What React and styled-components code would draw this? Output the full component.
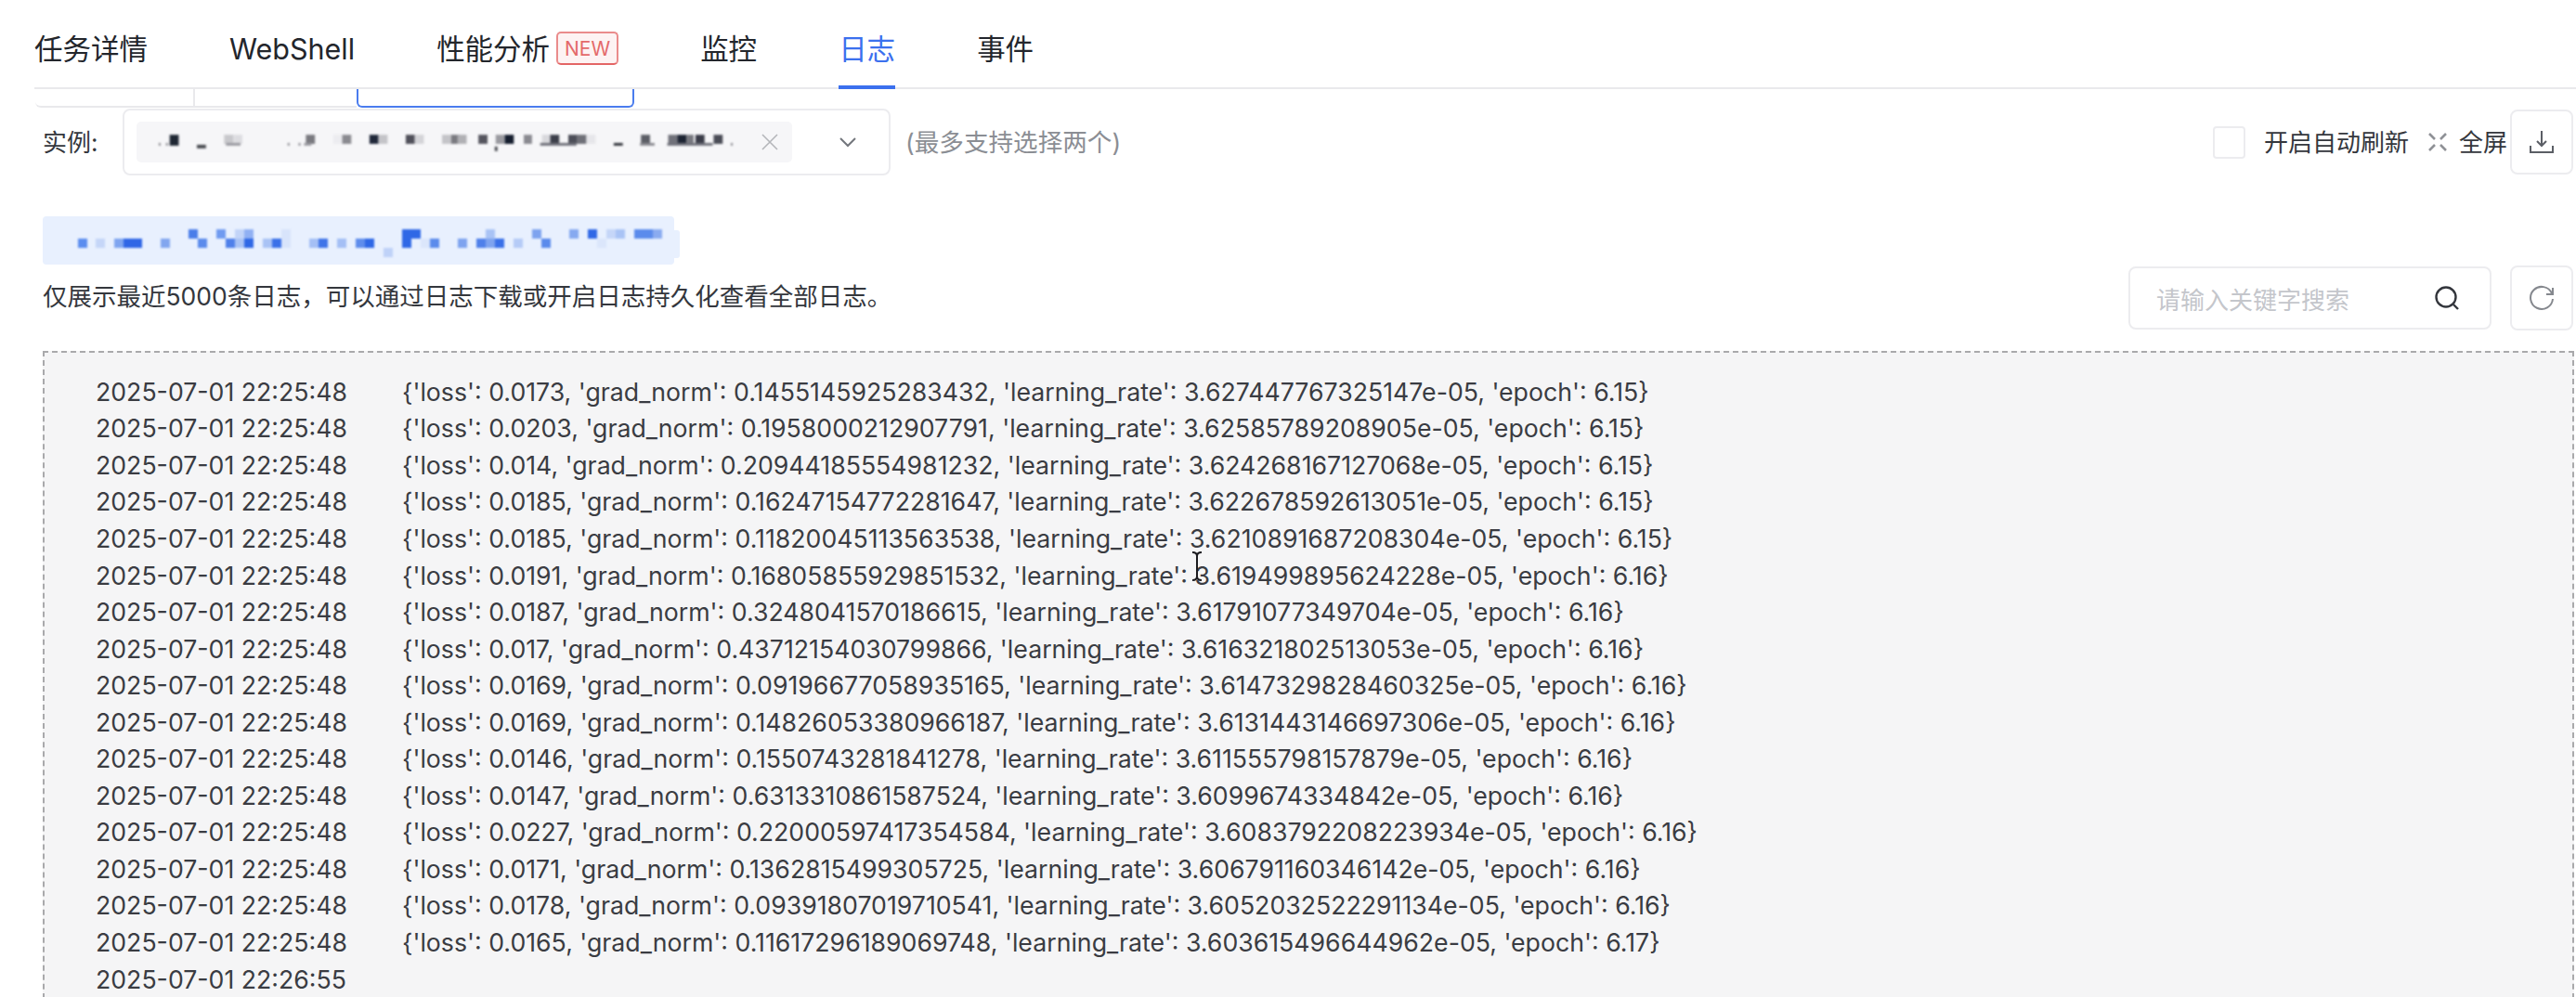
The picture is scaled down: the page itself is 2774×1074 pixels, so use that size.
import React from 'react';
import styled, { createGlobalStyle } from 'styled-components';

const GlobalStyle = createGlobalStyle`
  html, body {
    margin: 0;
    background: #fff;
  }
  body {
    font-family: Inter, "Noto Sans CJK SC", sans-serif;
    color: #34373d;
  }
`;

const Page = styled.div`
  position: relative;
  width: 2774px;
  height: 1074px;
  overflow: hidden;
`;

const TabBar = styled.nav`
  display: flex;
  gap: 88px;
  height: 94px;
  margin-left: 37px;
  border-bottom: 2px solid #e9e9ec;
`;

const Tab = styled.div`
  display: flex;
  align-items: flex-start;
  gap: 7px;
  height: 96px;
  box-sizing: border-box;
  padding-top: 38px;
  font-size: 30.5px;
  line-height: 30px;
  color: ${(p) => (p.$active ? '#3b70ee' : '#23262c')};
  border-bottom: 4px solid ${(p) => (p.$active ? '#3b70ee' : 'transparent')};
`;

const NewBadge = styled.span`
  display: flex;
  align-items: center;
  justify-content: center;
  box-sizing: border-box;
  width: 67px;
  height: 36px;
  margin-top: -4px;
  border: 2px solid #ea8c8c;
  border-bottom-color: #e46565;
  border-radius: 5px;
  background: #fdf3f3;
  color: #e46a6a;
  font-size: 21px;
  line-height: 1;
`;

const SubTabs = styled.div`
  display: flex;
  height: 20px;
  margin-left: 38px;
`;

const SubTab = styled.div`
  box-sizing: border-box;
  width: ${(p) => p.$width}px;
  border: 0 solid ${(p) => (p.$active ? '#4a7cee' : '#e9e9ec')};
  border-bottom-width: 2px;
  border-right-width: ${(p) => (p.$active || p.$first ? 2 : 0)}px;
  border-left-width: ${(p) => (p.$active ? 2 : 0)}px;
  border-radius: ${(p) => (p.$active ? '0 0 6px 6px' : p.$first ? '0 0 0 6px' : 0)};
`;

const Content = styled.main`
  padding: 1px 2px 0 46px;
`;

const Toolbar = styled.div`
  display: flex;
  align-items: center;
  height: 72px;
`;

const FieldLabel = styled.span`
  width: 86px;
  margin-bottom: 3px;
  font-size: 26px;
  color: #34373d;
`;

const SelectBox = styled.div`
  display: flex;
  align-items: center;
  box-sizing: border-box;
  width: 827px;
  height: 72px;
  padding-left: 13px;
  border: 2px solid #ececef;
  border-radius: 8px;
`;

const SelectedTag = styled.div`
  display: flex;
  align-items: center;
  justify-content: space-between;
  box-sizing: border-box;
  width: 706px;
  height: 44px;
  padding: 0 13px 0 22px;
  border-radius: 5px;
  background: #f6f6f8;
`;

const MaskedName = styled.svg`
  display: block;
  filter: blur(1.2px);
`;

const Chevron = styled.svg`
  margin-left: 50px;
  color: #73767c;
`;

const Hint = styled.span`
  margin-left: 16px;
  margin-bottom: 3px;
  font-size: 26.6px;
  color: #8b8e94;
`;

const RightTools = styled.div`
  display: flex;
  align-items: center;
  margin-left: auto;
  margin-right: 1px;
`;

const CheckBox = styled.span`
  box-sizing: border-box;
  width: 35px;
  height: 35px;
  margin-right: 20px;
  border: 2px solid #ececef;
  border-radius: 4px;
`;

const ToolText = styled.span`
  margin-bottom: 3px;
  font-size: 26px;
  color: #34373d;
  white-space: nowrap;
`;

const ExpandIcon = styled.svg`
  margin: 0 12px 0 20px;
  color: #8f9196;
`;

const IconButton = styled.button`
  display: flex;
  align-items: center;
  justify-content: center;
  box-sizing: border-box;
  width: 68px;
  height: ${(p) => p.$height}px;
  margin-left: ${(p) => p.$gap}px;
  padding: 0;
  border: 2px solid #ececef;
  border-radius: 8px;
  background: #fff;
  color: #5b5e65;
`;

const MaskedTitle = styled.div`
  position: relative;
  width: 680px;
  height: 52px;
  margin-top: 44px;
  border-radius: 4px;
  background: #e8f0fe;

  &::after {
    content: '';
    position: absolute;
    top: 15px;
    right: -6px;
    width: 6px;
    height: 30px;
    border-radius: 0 3px 3px 0;
    background: #e8f0fe;
  }
`;

const InfoRow = styled.div`
  display: flex;
  align-items: center;
  height: 70px;
  margin-top: 1px;
  margin-bottom: 22px;
`;

const InfoText = styled.span`
  margin-bottom: 7px;
  font-size: 26.5px;
  color: #34373d;
`;

const SearchBox = styled.div`
  display: flex;
  align-items: center;
  justify-content: space-between;
  box-sizing: border-box;
  width: 391px;
  height: 68px;
  margin-left: auto;
  padding: 0 32px 0 28px;
  border: 2px solid #ececef;
  border-radius: 8px;
  font-size: 26px;
  color: #c4c6cb;
`;

const InfoActions = styled.div`
  display: flex;
  margin-right: 1px;
`;

const LogPanel = styled.section`
  box-sizing: border-box;
  min-height: 720px;
  padding: 22px 0 40px 55px;
  border: 2px dashed #a9a9ab;
  background: #f5f5f6;
`;

const LogRow = styled.div`
  display: flex;
  height: 39.55px;
  align-items: center;
  font-size: 26.7px;
  color: #3a3c42;
  white-space: pre;
`;

const LogTime = styled.span`
  width: 330px;
  flex: none;
`;

const TextCursor = styled.svg`
  position: absolute;
  left: 1282px;
  top: 594px;
  color: #1b1b1f;
`;

const logs = [
  "{'loss': 0.0173, 'grad_norm': 0.1455145925283432, 'learning_rate': 3.627447767325147e-05, 'epoch': 6.15}",
  "{'loss': 0.0203, 'grad_norm': 0.1958000212907791, 'learning_rate': 3.62585789208905e-05, 'epoch': 6.15}",
  "{'loss': 0.014, 'grad_norm': 0.20944185554981232, 'learning_rate': 3.624268167127068e-05, 'epoch': 6.15}",
  "{'loss': 0.0185, 'grad_norm': 0.16247154772281647, 'learning_rate': 3.622678592613051e-05, 'epoch': 6.15}",
  "{'loss': 0.0185, 'grad_norm': 0.11820045113563538, 'learning_rate': 3.6210891687208304e-05, 'epoch': 6.15}",
  "{'loss': 0.0191, 'grad_norm': 0.16805855929851532, 'learning_rate': 3.619499895624228e-05, 'epoch': 6.16}",
  "{'loss': 0.0187, 'grad_norm': 0.3248041570186615, 'learning_rate': 3.61791077349704e-05, 'epoch': 6.16}",
  "{'loss': 0.017, 'grad_norm': 0.43712154030799866, 'learning_rate': 3.616321802513053e-05, 'epoch': 6.16}",
  "{'loss': 0.0169, 'grad_norm': 0.09196677058935165, 'learning_rate': 3.6147329828460325e-05, 'epoch': 6.16}",
  "{'loss': 0.0169, 'grad_norm': 0.14826053380966187, 'learning_rate': 3.6131443146697306e-05, 'epoch': 6.16}",
  "{'loss': 0.0146, 'grad_norm': 0.1550743281841278, 'learning_rate': 3.611555798157879e-05, 'epoch': 6.16}",
  "{'loss': 0.0147, 'grad_norm': 0.6313310861587524, 'learning_rate': 3.6099674334842e-05, 'epoch': 6.16}",
  "{'loss': 0.0227, 'grad_norm': 0.22000597417354584, 'learning_rate': 3.6083792208223934e-05, 'epoch': 6.16}",
  "{'loss': 0.0171, 'grad_norm': 0.1362815499305725, 'learning_rate': 3.606791160346142e-05, 'epoch': 6.16}",
  "{'loss': 0.0178, 'grad_norm': 0.09391807019710541, 'learning_rate': 3.6052032522291134e-05, 'epoch': 6.16}",
  "{'loss': 0.0165, 'grad_norm': 0.11617296189069748, 'learning_rate': 3.603615496644962e-05, 'epoch': 6.17}",
];

// pixelated instance name: [x, y, width, height, colour]
const greyBlocks = [
  [0, 6, 10, 12, '#1f2733'], [60, 6, 10, 10, '#c8c8cc'], [70, 6, 10, 10, '#dcdce0'],
  [150, 6, 10, 10, '#7a7a80'], [180, 6, 10, 10, '#ececf0'], [190, 6, 10, 10, '#8a8a90'],
  [220, 6, 10, 10, '#20283a'], [230, 6, 10, 10, '#c4c4c8'], [260, 6, 10, 10, '#50505a'],
  [270, 6, 10, 10, '#d4d4d8'], [300, 6, 10, 10, '#c4c4c8'], [310, 6, 10, 10, '#7a7a80'],
  [317, 6, 10, 10, '#b0b0b4'], [340, 6, 10, 10, '#55555e'], [359, 6, 10, 10, '#9a9aa0'],
  [369, 6, 10, 10, '#151e2e'], [390, 6, 9, 10, '#8a8a90'], [410, 6, 9, 10, '#d8d8dc'],
  [419, 6, 10, 10, '#3c3f4a'], [439, 6, 10, 10, '#4c4e58'], [449, 6, 10, 10, '#6f7078'],
  [459, 6, 10, 10, '#e6e6ea'], [489, 15, 10, 3, '#33353c'], [519, 6, 10, 10, '#5c5e66'],
  [549, 6, 10, 10, '#70717a'], [559, 6, 10, 10, '#1d2433'], [569, 6, 8, 10, '#77787f'],
  [579, 6, 10, 10, '#3a3c48'], [599, 6, 10, 10, '#4a4c56'], [30, 17, 10, 4, '#4a4c52'],
  [-12, 15, 2, 3, '#8a8a90'], [-4, 15, 2, 3, '#8a8a90'], [130, 15, 2, 3, '#8a8a90'],
  [142, 15, 2, 3, '#8a8a90'], [358, 19, 3, 5, '#4a4c52'], [618, 15, 2, 3, '#8a8a90'],
  [62, 15, 16, 3, '#9a9aa0'], [148, 15, 8, 3, '#9a9aa0'], [408, 15, 40, 3, '#70717a'],
  [518, 15, 16, 3, '#8a8a90'], [548, 15, 50, 3, '#70717a'],
];

// pixelated job title, relative to the top left of the blue strip
const blueBlocks = [
  [38, 24, 10, 10, '#5b8def'], [57, 24, 10, 10, '#c5d6f8'], [77, 24, 10, 10, '#7fa5f0'],
  [87, 24, 20, 10, '#2f66e6'], [127, 24, 10, 10, '#82a6ef'], [157, 14, 10, 10, '#4a7de9'],
  [167, 24, 10, 10, '#5b8bec'], [187, 14, 10, 10, '#6f9af0'], [197, 24, 10, 10, '#4f80ea'],
  [207, 14, 10, 10, '#c2d4f8'], [207, 24, 10, 10, '#a9c3f5'], [217, 14, 10, 10, '#90b0f3'],
  [217, 24, 10, 10, '#2f68e6'], [237, 24, 10, 10, '#a9c3f5'], [247, 24, 10, 10, '#3a70e8'],
  [257, 14, 10, 20, '#d8e4fb'], [287, 24, 10, 10, '#a4bff5'], [297, 24, 10, 10, '#3f74e8'],
  [317, 24, 10, 10, '#a4bff5'], [337, 24, 10, 10, '#5f8dec'], [347, 24, 10, 10, '#2f68e6'],
  [367, 34, 10, 10, '#bfd2f8'], [387, 14, 20, 10, '#2f68e6'], [387, 24, 10, 10, '#2f68e6'],
  [407, 24, 10, 10, '#dbe6fb'], [417, 24, 10, 10, '#5b8bec'], [447, 24, 10, 10, '#7ea3ef'],
  [467, 24, 10, 10, '#4f80ea'], [477, 14, 10, 10, '#a9c3f5'], [477, 24, 10, 10, '#7ea3ef'],
  [487, 24, 10, 10, '#3a70e8'], [507, 24, 10, 10, '#b5cbf7'], [527, 14, 10, 10, '#7ea3ef'],
  [537, 24, 10, 10, '#5b8bec'], [567, 14, 10, 10, '#86a9f0'], [587, 14, 10, 10, '#2f68e6'],
  [597, 24, 10, 10, '#dbe6fb'], [607, 14, 10, 10, '#c5d6f8'], [617, 14, 10, 10, '#a9c3f5'],
  [637, 14, 20, 10, '#5b8bec'], [657, 14, 10, 10, '#8aabf0'],
];

const Blocks = ({ items }) =>
  items.map(([x, y, w, h, fill]) => (
    <rect key={`${x}-${y}`} x={x} y={y} width={w} height={h} fill={fill} />
  ));

const App = () => (
  <Page>
    <GlobalStyle />
    <TabBar>
      <Tab>任务详情</Tab>
      <Tab>WebShell</Tab>
      <Tab>
        性能分析
        <NewBadge>NEW</NewBadge>
      </Tab>
      <Tab>监控</Tab>
      <Tab $active>日志</Tab>
      <Tab>事件</Tab>
    </TabBar>
    <SubTabs>
      <SubTab $first $width={172} />
      <SubTab $width={174} />
      <SubTab $active $width={299} />
    </SubTabs>
    <Content>
      <Toolbar>
        <FieldLabel>实例:</FieldLabel>
        <SelectBox>
          <SelectedTag>
            <MaskedName width="620" height="28" viewBox="-14 0 634 28">
              <Blocks items={greyBlocks} />
            </MaskedName>
            <svg width="22" height="22" viewBox="0 0 22 22" fill="none" stroke="#b4b6ba" strokeWidth="1.6">
              <path d="M3 3l16 16M19 3L3 19" />
            </svg>
          </SelectedTag>
          <Chevron width="20" height="20" viewBox="0 0 20 20" fill="none" stroke="currentColor" strokeWidth="2">
            <path d="M2 6l8 8 8-8" />
          </Chevron>
        </SelectBox>
        <Hint>(最多支持选择两个)</Hint>
        <RightTools>
          <CheckBox />
          <ToolText>开启自动刷新</ToolText>
          <ExpandIcon width="22" height="22" viewBox="0 0 22 22" fill="none" stroke="currentColor" strokeWidth="2.6">
            <path d="M2 2l6 6M20 2l-6 6M2 20l6-6M20 20l-6-6" />
          </ExpandIcon>
          <ToolText>全屏</ToolText>
          <IconButton $height={70} $gap={3}>
            <svg width="28" height="28" viewBox="0 0 28 28" fill="none" stroke="currentColor" strokeWidth="2">
              <path d="M14 2v16M9 13l5 5 5-5M2 18v7h24v-7" />
            </svg>
          </IconButton>
        </RightTools>
      </Toolbar>
      <MaskedTitle>
        <MaskedName width="680" height="52" viewBox="0 0 680 52">
          <Blocks items={blueBlocks} />
        </MaskedName>
      </MaskedTitle>
      <InfoRow>
        <InfoText>仅展示最近5000条日志，可以通过日志下载或开启日志持久化查看全部日志。</InfoText>
        <SearchBox>
          请输入关键字搜索
          <svg width="28" height="28" viewBox="0 0 28 28" fill="none" stroke="#33363c" strokeWidth="2.4">
            <circle cx="13" cy="13" r="10.5" />
            <path d="M21 21l5 5" />
          </svg>
        </SearchBox>
        <InfoActions>
          <IconButton $height={70} $gap={20}>
            <svg width="28" height="28" viewBox="0 0 28 28" fill="none" stroke="#85888e" strokeWidth="2">
              <path d="M25 9A12 12 0 1 0 26 15M26 3v7h-7" />
            </svg>
          </IconButton>
        </InfoActions>
      </InfoRow>
      <LogPanel>
        {logs.map((msg) => (
          <LogRow key={msg}>
            <LogTime>2025-07-01 22:25:48</LogTime>
            {msg}
          </LogRow>
        ))}
        <LogRow>
          <LogTime>2025-07-01 22:26:55</LogTime>
        </LogRow>
      </LogPanel>
    </Content>
    <TextCursor width="14" height="32" viewBox="0 0 14 32" fill="none" stroke="currentColor" strokeWidth="2">
      <path d="M2 1c3 0 5 1 5 4v22c0 3 2 4 5 4M12 1c-3 0-5 1-5 4M7 27c0 3-2 4-5 4" />
    </TextCursor>
  </Page>
);

export default App;
